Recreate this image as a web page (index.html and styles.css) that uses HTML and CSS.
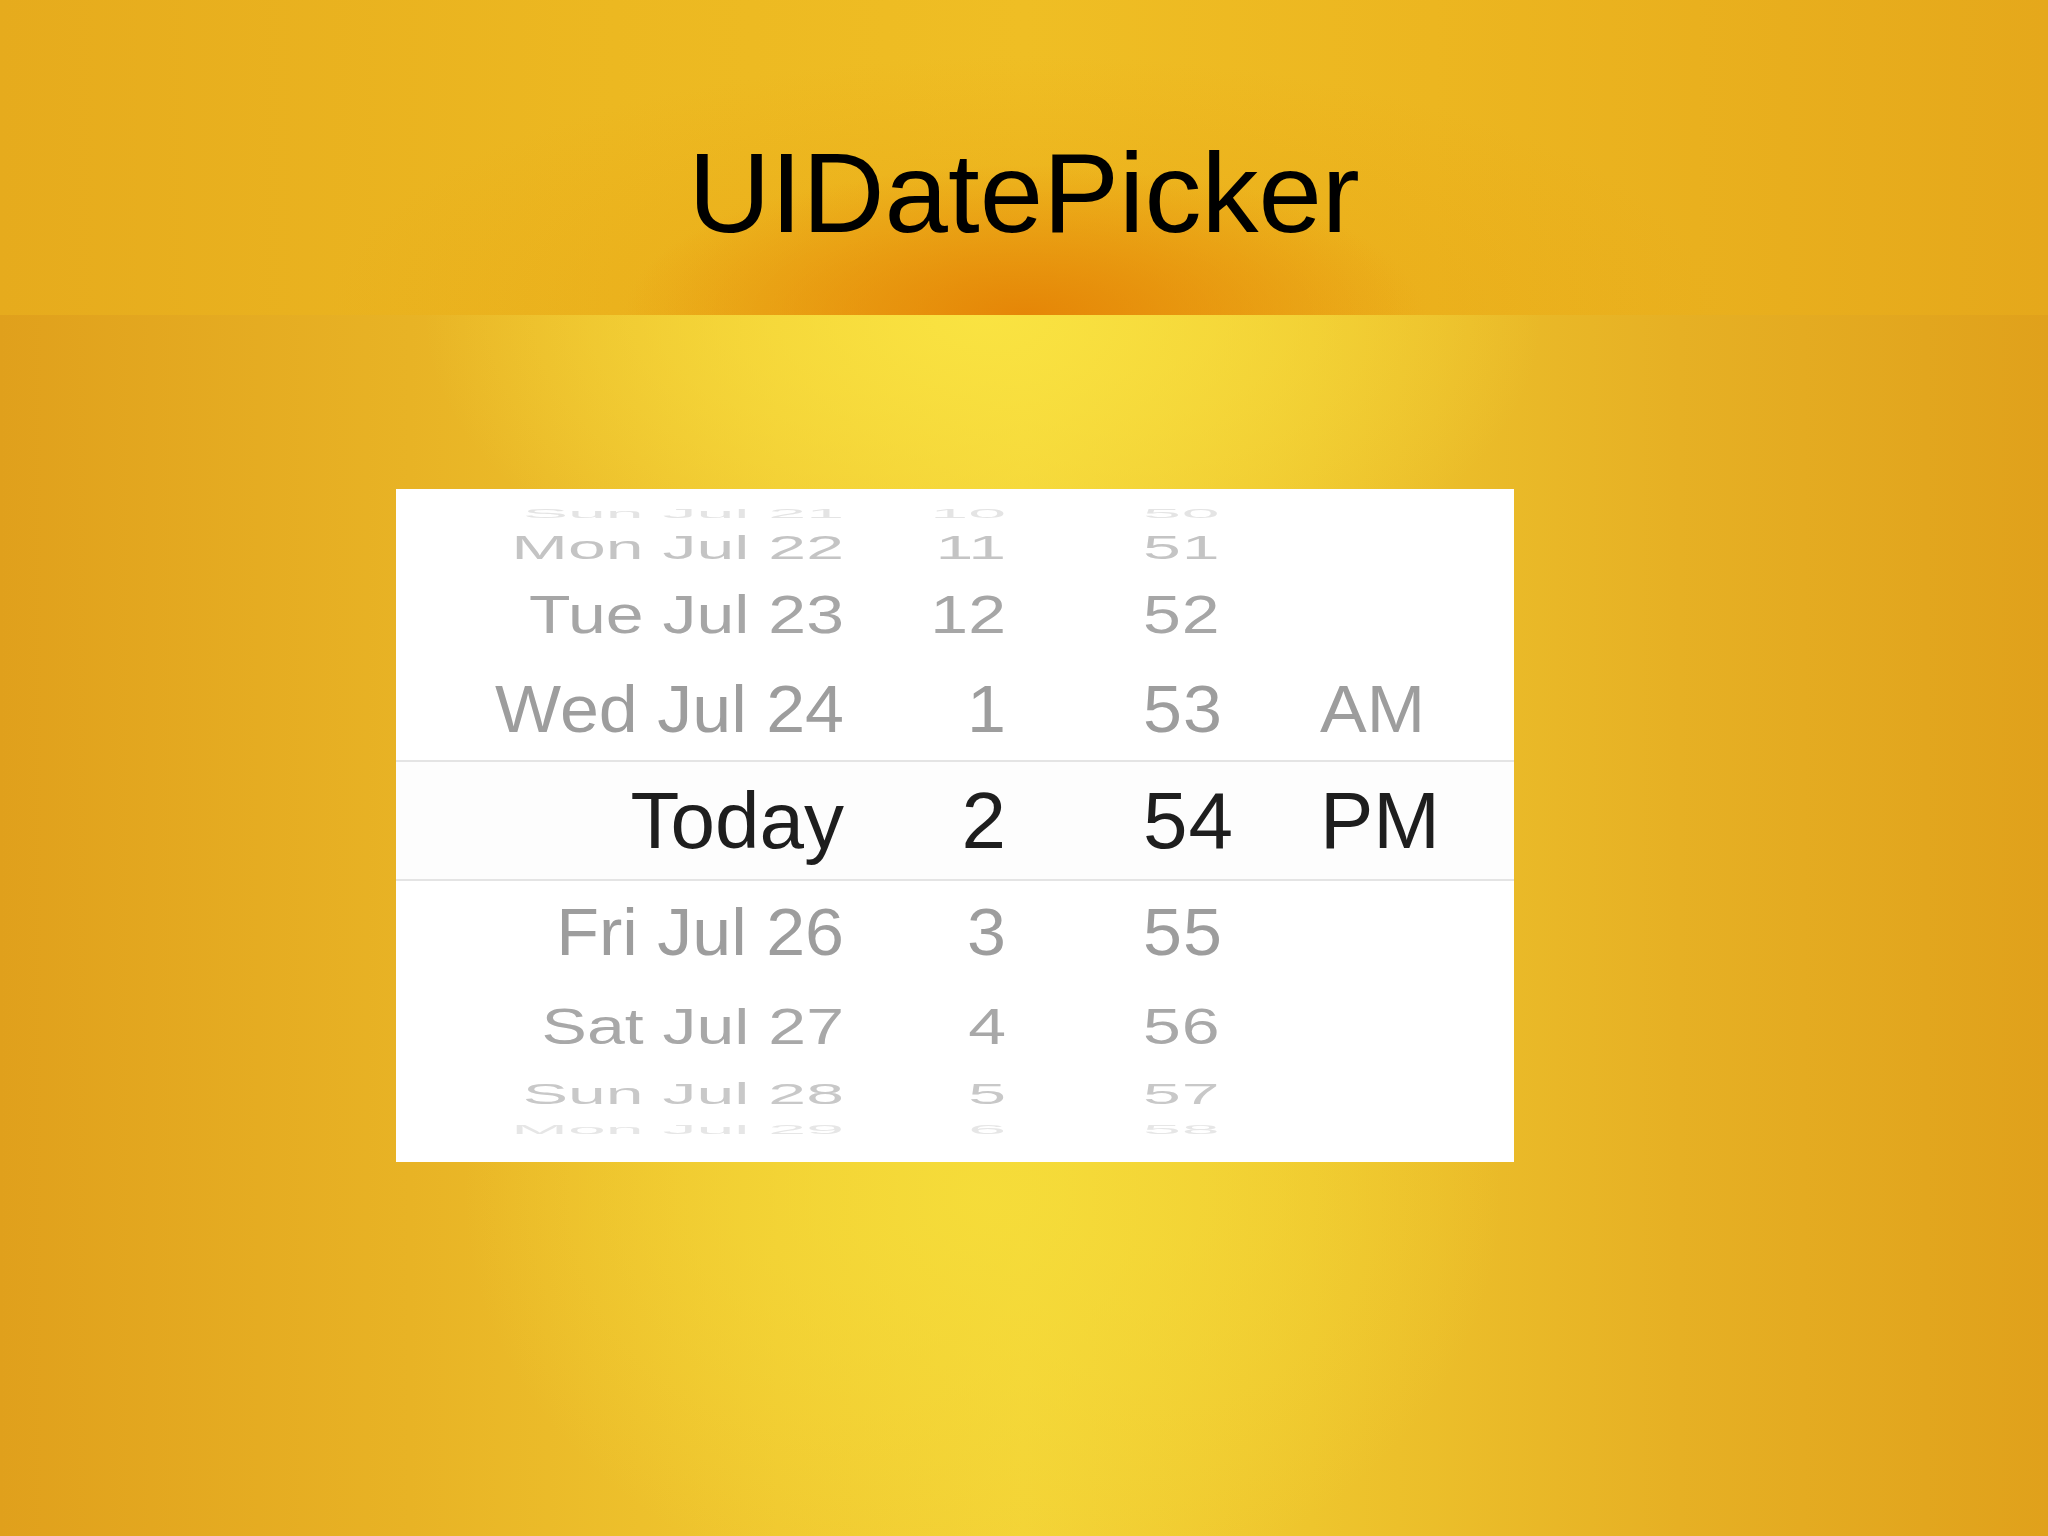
FILE: index.html
```html
<!DOCTYPE html>
<html lang="en">
<head>
  <meta charset="UTF-8" />
  <title>UIDatePicker</title>
  <link rel="stylesheet" href="styles.css">
</head>
<body>
  <header class="slide-head">
    <h1>UIDatePicker</h1>
  </header>

  <main class="stage">
    <div class="picker">
      <div class="row r-edge-top">
        <div class="cell date"><span>Sun Jul 21</span></div>
        <div class="cell hour"><span>10</span></div>
        <div class="cell min"><span>50</span></div>
        <div class="cell ampm"></div>
      </div>
      <div class="row r-far-top">
        <div class="cell date"><span>Mon Jul 22</span></div>
        <div class="cell hour"><span>11</span></div>
        <div class="cell min"><span>51</span></div>
        <div class="cell ampm"></div>
      </div>
      <div class="row r-mid-top">
        <div class="cell date"><span>Tue Jul 23</span></div>
        <div class="cell hour"><span>12</span></div>
        <div class="cell min"><span>52</span></div>
        <div class="cell ampm"></div>
      </div>
      <div class="row r-near-top">
        <div class="cell date"><span>Wed Jul 24</span></div>
        <div class="cell hour"><span>1</span></div>
        <div class="cell min"><span>53</span></div>
        <div class="cell ampm"><span>AM</span></div>
      </div>
      <div class="row selected">
        <div class="cell date"><span>Today</span></div>
        <div class="cell hour"><span>2</span></div>
        <div class="cell min"><span>54</span></div>
        <div class="cell ampm"><span>PM</span></div>
      </div>
      <div class="row r-near-bottom">
        <div class="cell date"><span>Fri Jul 26</span></div>
        <div class="cell hour"><span>3</span></div>
        <div class="cell min"><span>55</span></div>
        <div class="cell ampm"></div>
      </div>
      <div class="row r-mid-bottom">
        <div class="cell date"><span>Sat Jul 27</span></div>
        <div class="cell hour"><span>4</span></div>
        <div class="cell min"><span>56</span></div>
        <div class="cell ampm"></div>
      </div>
      <div class="row r-far-bottom">
        <div class="cell date"><span>Sun Jul 28</span></div>
        <div class="cell hour"><span>5</span></div>
        <div class="cell min"><span>57</span></div>
        <div class="cell ampm"></div>
      </div>
      <div class="row r-edge-bottom">
        <div class="cell date"><span>Mon Jul 29</span></div>
        <div class="cell hour"><span>6</span></div>
        <div class="cell min"><span>58</span></div>
        <div class="cell ampm"></div>
      </div>
    </div>
  </main>
</body>
</html>
```

FILE: styles.css
```css
* {
  box-sizing: border-box;
}

html, body {
  height: 100%;
}

body {
  margin: 0;
  font-family: 'Liberation Sans', Arial, sans-serif;
  display: flex;
  flex-direction: column;
  background: #e9b21f;
}

/* title band */
.slide-head {
  height: 315px;
  padding-top: 136px;
  text-align: center;
  background:
    radial-gradient(ellipse 400px 150px at 50% 100%, rgba(229, 132, 6, 0.95), rgba(229, 140, 8, 0) 100%),
    radial-gradient(ellipse 700px 260px at 50% 100%, rgba(232, 160, 16, 0.6), rgba(232, 160, 16, 0) 100%),
    linear-gradient(90deg, #e6ab1d 0%, #ecb821 30%, #efbe24 50%, #ecb620 70%, #e5a81b 100%);
}

.slide-head h1 {
  margin: 0;
  font-size: 114px;
  line-height: 114px;
  font-weight: 400;
  color: #000;
}

/* lower area with the picker */
.stage {
  flex: 1;
  padding: 174px 0 0 396px;
  background:
    radial-gradient(ellipse 560px 320px at 48% 0%, rgba(250, 228, 66, 0.95), rgba(250, 228, 66, 0) 100%),
    radial-gradient(ellipse 520px 420px at 48% 72%, rgba(246, 222, 58, 0.85), rgba(246, 222, 58, 0) 100%),
    linear-gradient(90deg, #e0a01c 0%, #e8b325 20%, #f0c830 38%, #f3d236 50%, #eec52d 64%, #e6b024 82%, #e0a11b 100%);
}

.picker {
  width: 1118px;
  height: 673px;
  background: #fff;
  padding: 15px 0 21px;
  display: flex;
  flex-direction: column;
}

.row {
  display: flex;
  flex-shrink: 0;
  font-size: 68px;
  color: #9c9c9c;
}

.cell {
  display: flex;
  align-items: center;
}

.cell span {
  display: block;
  line-height: 1;
  white-space: nowrap;
  transform-origin: 50% 50%;
  filter: blur(0.6px);
}

.date {
  width: 448px;
  justify-content: flex-end;
}

.hour {
  width: 162px;
  justify-content: flex-end;
}

.min {
  width: 312px;
  padding-left: 137px;
  letter-spacing: 1px;
}

.ampm {
  flex: 1;
  padding-left: 2px;
}

/* wheel rows, squashed towards the edges */
.r-edge-top { height: 19px; color: #e4e4e4; }
.r-edge-top span { transform: scaleY(0.18); }

.r-far-top { height: 47px; color: #c4c4c4; }
.r-far-top span { transform: scaleY(0.5); }

.r-mid-top { height: 87px; color: #a6a6a6; }
.r-mid-top span { transform: scaleY(0.79); }

.r-near-top { height: 103px; font-size: 70px; color: #9d9d9d; }
.r-near-top span { transform: scaleY(0.95); }

.r-near-bottom { height: 101px; font-size: 70px; color: #9d9d9d; }
.r-near-bottom span { transform: scaleY(0.95); }

.r-mid-bottom { height: 87px; color: #a8a8a8; }
.r-mid-bottom span { transform: scaleY(0.74); }

.r-far-bottom { height: 47px; color: #c8c8c8; }
.r-far-bottom span { transform: scaleY(0.44); }

.r-edge-bottom { height: 25px; color: #e6e6e6; }
.r-edge-bottom span { transform: scaleY(0.2); }

.selected {
  height: 121px;
  font-size: 80px;
  color: #1e1e1e;
  background: #fdfdfd;
  border-top: 2px solid #e4e4e4;
  border-bottom: 2px solid #e4e4e4;
}

.selected .cell span {
  filter: blur(0.3px);
}
```
